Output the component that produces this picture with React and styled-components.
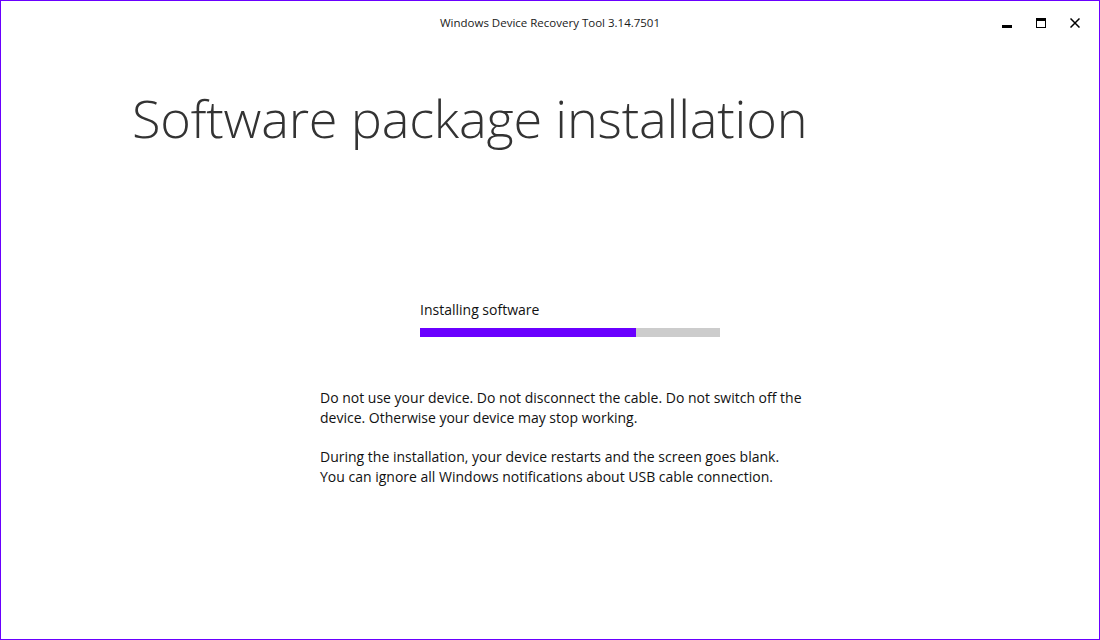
import React from 'react';
import styled, { createGlobalStyle } from 'styled-components';

const GlobalStyle = createGlobalStyle`
  html, body {
    margin: 0;
    padding: 0;
    background: #fff;
  }
  * { box-sizing: border-box; }
`;

const Window = styled.div`
  width: 1100px;
  height: 640px;
  border: 1px solid #6a00ff;
  background: #fff;
  display: flex;
  flex-direction: column;
  font-family: "Open Sans", "Noto Sans", sans-serif;
  color: #000;
`;

const TitleBar = styled.div`
  height: 44px;
  display: grid;
  grid-template-columns: 1fr auto 1fr;
  align-items: center;
`;

const TitleText = styled.div`
  grid-column: 2;
  font-size: 11.5px;
  color: #1a1a1a;
  padding-bottom: 2px;
`;

const Controls = styled.div`
  grid-column: 3;
  justify-self: end;
  display: flex;
  align-items: center;
  padding-right: 7px;
  padding-bottom: 1px;
`;

const ControlButton = styled.div`
  width: 34px;
  height: 30px;
  display: flex;
  align-items: center;
  justify-content: center;
`;

const Content = styled.div`
  flex: 1;
  display: flex;
  flex-direction: column;
`;

const Heading = styled.h1`
  margin: 37px 0 0 131px;
  font-weight: 300;
  font-size: 52.3px;
  line-height: 72px;
  color: #333;
  letter-spacing: -0.2px;
`;

const ProgressBlock = styled.div`
  margin: 146px 0 0 419px;
  width: 300px;
`;

const ProgressLabel = styled.div`
  font-size: 14px;
  line-height: 20px;
  color: #111;
`;

const Track = styled.div`
  margin-top: 8px;
  height: 9px;
  background: #cccccc;
`;

const Fill = styled.div`
  height: 100%;
  background: #6a00ff;
`;

const Notes = styled.div`
  margin: 51px 0 0 319px;
  width: 520px;
  display: flex;
  flex-direction: column;
  gap: 19px;
`;

const Note = styled.p`
  margin: 0;
  font-size: 14px;
  line-height: 20px;
  color: #111;
`;

const MinimizeIcon = () => (
  <svg width="10" height="10" viewBox="0 0 10 10">
    <rect x="0" y="7" width="10" height="3" fill="#000" />
  </svg>
);

const MaximizeIcon = () => (
  <svg width="10" height="10" viewBox="0 0 10 10">
    <rect x="0.5" y="0.5" width="9" height="9" fill="none" stroke="#000" />
    <rect x="0" y="0" width="10" height="3" fill="#000" />
  </svg>
);

const CloseIcon = () => (
  <svg width="10" height="10" viewBox="0 0 10 10">
    <path d="M0.5 0.5 L9.5 9.5 M9.5 0.5 L0.5 9.5" stroke="#000" strokeWidth="1.5" />
  </svg>
);

const App = () => {
  const progress = 72;

  return (
    <>
      <GlobalStyle />
      <Window>
        <TitleBar>
          <TitleText>Windows Device Recovery Tool 3.14.7501</TitleText>
          <Controls>
            <ControlButton><MinimizeIcon /></ControlButton>
            <ControlButton><MaximizeIcon /></ControlButton>
            <ControlButton><CloseIcon /></ControlButton>
          </Controls>
        </TitleBar>
        <Content>
          <Heading>Software package installation</Heading>
          <ProgressBlock>
            <ProgressLabel>Installing software</ProgressLabel>
            <Track>
              <Fill style={{ width: `${progress}%` }} />
            </Track>
          </ProgressBlock>
          <Notes>
            <Note>
              Do not use your device. Do not disconnect the cable. Do not switch off the
              <br />
              device. Otherwise your device may stop working.
            </Note>
            <Note>
              During the installation, your device restarts and the screen goes blank.
              <br />
              You can ignore all Windows notifications about USB cable connection.
            </Note>
          </Notes>
        </Content>
      </Window>
    </>
  );
};

export default App;
